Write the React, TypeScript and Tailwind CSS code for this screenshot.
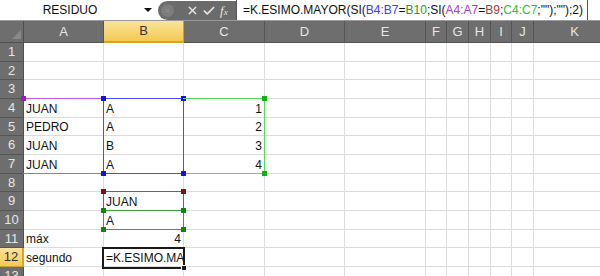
import { X, Check } from 'lucide-react';

const font = { fontFamily: '"Liberation Sans", Arial, sans-serif' };

const cols = ['A', 'B', 'C', 'D', 'E', 'F', 'G', 'H', 'I', 'J', 'K'];

const data: Record<number, Record<string, string>> = {
  4: { A: 'JUAN', B: 'A', C: '1' },
  5: { A: 'PEDRO', B: 'A', C: '2' },
  6: { A: 'JUAN', B: 'B', C: '3' },
  7: { A: 'JUAN', B: 'A', C: '4' },
  9: { B: 'JUAN' },
  10: { B: 'A' },
  11: { A: 'máx', B: '4' },
  12: { A: 'segundo', B: '=K.ESIMO.MA' },
};

const isNum = (v: string) => /^\d+$/.test(v);

function Corners({ color }: { color: string }) {
  return (
    <>
      <div className={`absolute -left-[3px] -top-[3px] size-[5px] ${color}`} />
      <div className={`absolute -right-[3px] -top-[3px] size-[5px] ${color}`} />
      <div className={`absolute -left-[3px] -bottom-[3px] size-[5px] ${color}`} />
      <div className={`absolute -right-[3px] -bottom-[3px] size-[5px] ${color}`} />
    </>
  );
}

function FormulaBar() {
  return (
    <div className="flex h-[21px] bg-white border-b border-[#9a9a9a]" style={font}>
      <div className="w-[140px] flex items-center justify-center text-[12px] text-[#111]">RESIDUO</div>
      <div className="w-[16px] flex items-center justify-center">
        <div className="w-0 h-0 border-l-[4px] border-r-[4px] border-t-[4px] border-l-transparent border-r-transparent border-t-[#111]" />
      </div>
      <div className="ml-[2px] w-[78px] h-[19px] mt-[1px] bg-[#6b6b6b] rounded-l-full flex items-center">
        <div className="ml-[3px] size-[13px] rounded-full bg-[#7d7d7d] flex items-center justify-center text-[9px] text-[#9a9a9a] leading-none">=</div>
        <X size={13} strokeWidth={2.5} className="ml-[12px] text-[#e4e4e4]" />
        <Check size={14} strokeWidth={3} className="ml-[3px] text-[#e4e4e4]" />
        <span className="ml-[4px] text-[13px] italic text-[#e4e4e4] leading-none" style={{ fontFamily: '"Liberation Serif", serif' }}>
          f<span className="text-[9px]">x</span>
        </span>
      </div>
      <div className="w-[352px] h-[20px] border-l border-r border-[#555] flex items-center pl-[6px] text-[12px] text-[#111] whitespace-nowrap overflow-hidden">
        =K.ESIMO.MAYOR(SI(<span className="text-[#3a3aff]">B4:B7</span>=<span className="text-[#2a9a2a]">B10</span>;SI(
        <span className="text-[#a640c8]">A4:A7</span>=<span className="text-[#a03a3a]">B9</span>;
        <span className="text-[#33bb33]">C4:C7</span>;"");"");2)
      </div>
      <div className="flex-1 bg-white" />
    </div>
  );
}

export default function App() {
  const rows = Array.from({ length: 13 }, (_, i) => i + 1);
  return (
    <div className="w-[600px] h-[276px] overflow-hidden bg-white" style={font}>
      <FormulaBar />
      <div className="relative">
        <div className="grid grid-cols-[24px_80px_80px_81px_80px_81px_21px_22px_22px_21px_22px_82px] grid-rows-[22px_repeat(13,18.667px)]">
          {/* header row */}
          <div className="relative bg-[#6e6e6e] border-r border-b border-[#4f4f4f]">
            <div className="absolute right-[2px] bottom-[3px] w-0 h-0 border-l-[9px] border-t-[9px] border-l-transparent border-t-transparent border-b-0 border-r-0 [border-right:0] [border-bottom:9px_solid_#8a8a8a]" />
          </div>
          {cols.map((c) =>
            c === 'B' ? (
              <div
                key={c}
                className="flex items-center justify-center text-[13px] text-[#333] bg-gradient-to-b from-[#fbe39a] to-[#f4c94e] border-r border-b-2 border-r-[#c9a13c] border-b-[#e0a020]"
              >
                {c}
              </div>
            ) : (
              <div
                key={c}
                className="flex items-center justify-center text-[13px] text-[#e6e6e6] bg-[#6e6e6e] border-r border-b border-r-[#555] border-b-[#4f4f4f]"
              >
                {c}
              </div>
            )
          )}
          {rows.map((r) => (
            <Row key={r} r={r} />
          ))}
        </div>

        {/* range highlights */}
        <div className="absolute left-[23px] top-[77px] w-[81px] h-[75.67px] border-t border-b border-[#c45ae0]">
          <div className="absolute -left-[2px] -top-[3px] size-[5px] bg-[#9a1cc8]" />
        </div>
        <div className="absolute left-[103px] top-[77px] w-[81px] h-[75.67px] border border-[#4a4aff]">
          <Corners color="bg-[#1010e8]" />
        </div>
        <div className="absolute left-[183px] top-[77px] w-[82px] h-[75.67px] border border-[#55dd55] border-l-0">
          <div className="absolute -right-[3px] -top-[3px] size-[5px] bg-[#12b012]" />
          <div className="absolute -right-[3px] -bottom-[3px] size-[5px] bg-[#12b012]" />
          <div className="absolute -left-[2px] -bottom-[3px] size-[5px] bg-[#1010e8]" />
        </div>
        <div className="absolute left-[103px] top-[170.33px] w-[81px] h-[19.67px] border border-[#b04848]">
          <Corners color="bg-[#8a0c0c]" />
        </div>
        <div className="absolute left-[103px] top-[189px] w-[81px] h-[19.67px] border border-[#3aa03a]">
          <Corners color="bg-[#0c860c]" />
        </div>
        <div className="absolute left-[102px] top-[226.33px] w-[83px] h-[21.67px] border-2 border-[#1a1a1a]">
          <div className="absolute -right-[4px] -bottom-[4px] size-[6px] bg-[#1a1a1a] border border-white" />
        </div>
      </div>
    </div>
  );
}

function Row({ r }: { r: number }) {
  const sel = r === 12;
  const d = data[r] || {};
  return (
    <>
      {sel ? (
        <div className="flex items-center justify-center text-[13px] text-[#333] bg-gradient-to-b from-[#fbe39a] to-[#f4c94e] border-r-2 border-b border-r-[#e0a020] border-b-[#c9a13c]">
          {r}
        </div>
      ) : (
        <div className="flex items-center justify-center text-[13px] text-[#e6e6e6] bg-[#6e6e6e] border-r border-b border-r-[#4f4f4f] border-b-[#555]">
          {r}
        </div>
      )}
      {cols.map((c) => {
        const v = d[c];
        return (
          <div
            key={c}
            className={`flex items-end pb-[1px] px-[2px] overflow-hidden whitespace-nowrap text-[12px] leading-[14px] text-[#111] border-r border-b border-[#dcdcdc] ${
              v && isNum(v) ? 'justify-end' : 'justify-start'
            }`}
          >
            {v}
          </div>
        );
      })}
    </>
  );
}
